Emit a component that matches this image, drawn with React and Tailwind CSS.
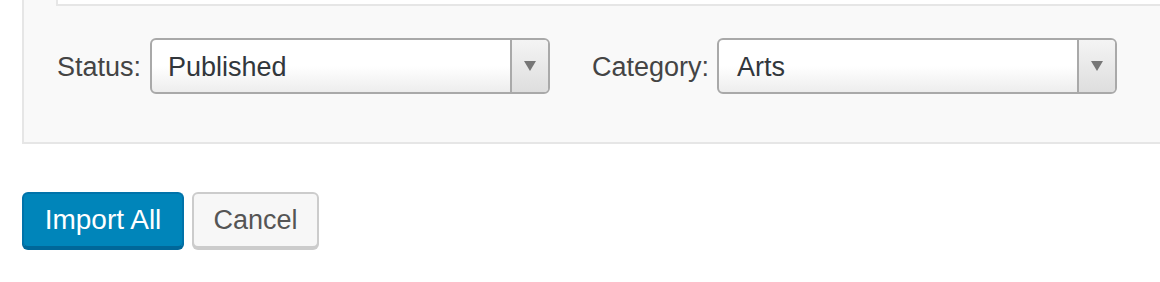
export default function App() {
  const font = { fontFamily: '"Liberation Sans", Arial, sans-serif' };
  const Select = ({ value, pad }) => (
    <div className="flex h-[56px] w-[400px] rounded-[6px] border-2 border-[#a9a9a9] overflow-hidden bg-gradient-to-b from-white from-50% to-[#ededed]">
      <div className={`flex-1 flex items-center pt-[2px] text-[27px] text-[#32373c] ${pad}`}>{value}</div>
      <div className="w-[38px] flex items-center justify-center border-l-2 border-[#a9a9a9] bg-gradient-to-b from-[#f4f4f4] to-[#dedede]">
        <svg width="12" height="10" viewBox="0 0 12 10">
          <path d="M0 0 L12 0 L6 10 Z" fill="#777" />
        </svg>
      </div>
    </div>
  );
  return (
    <div className="w-[1160px] h-[282px] bg-white overflow-hidden" style={font}>
      <div className="ml-[22px] mr-[-20px] h-[144px] bg-[#f9f9f9] border-l-2 border-b-2 border-[#e6e6e6] pl-[32px]">
        <div className="h-[6px] bg-white border-l-2 border-b-2 border-[#e6e6e6]" />
        <div className="flex items-center mt-[32px] text-[27px] text-[#444]">
          <span className="ml-[1px] pt-[2px]">Status:</span>
          <div className="ml-[9px]"><Select value="Published" pad="pl-[16px]" /></div>
          <span className="ml-[42px] pt-[2px]">Category:</span>
          <div className="ml-[8px]"><Select value="Arts" pad="pl-[18px]" /></div>
        </div>
      </div>
      <div className="flex gap-[8px] ml-[22px] mt-[48px]">
        <button className="h-[56px] w-[162px] rounded-[6px] bg-[#0085ba] border-2 border-[#0073aa] border-b-[#006799] text-white text-[28px] flex items-center justify-center shadow-[0_2px_0_#006799]">
          Import All
        </button>
        <button className="h-[56px] w-[127px] rounded-[6px] bg-[#f7f7f7] border-2 border-[#cccccc] text-[#555] text-[27px] flex items-center justify-center shadow-[0_2px_0_#cccccc]">
          Cancel
        </button>
      </div>
    </div>
  );
}
